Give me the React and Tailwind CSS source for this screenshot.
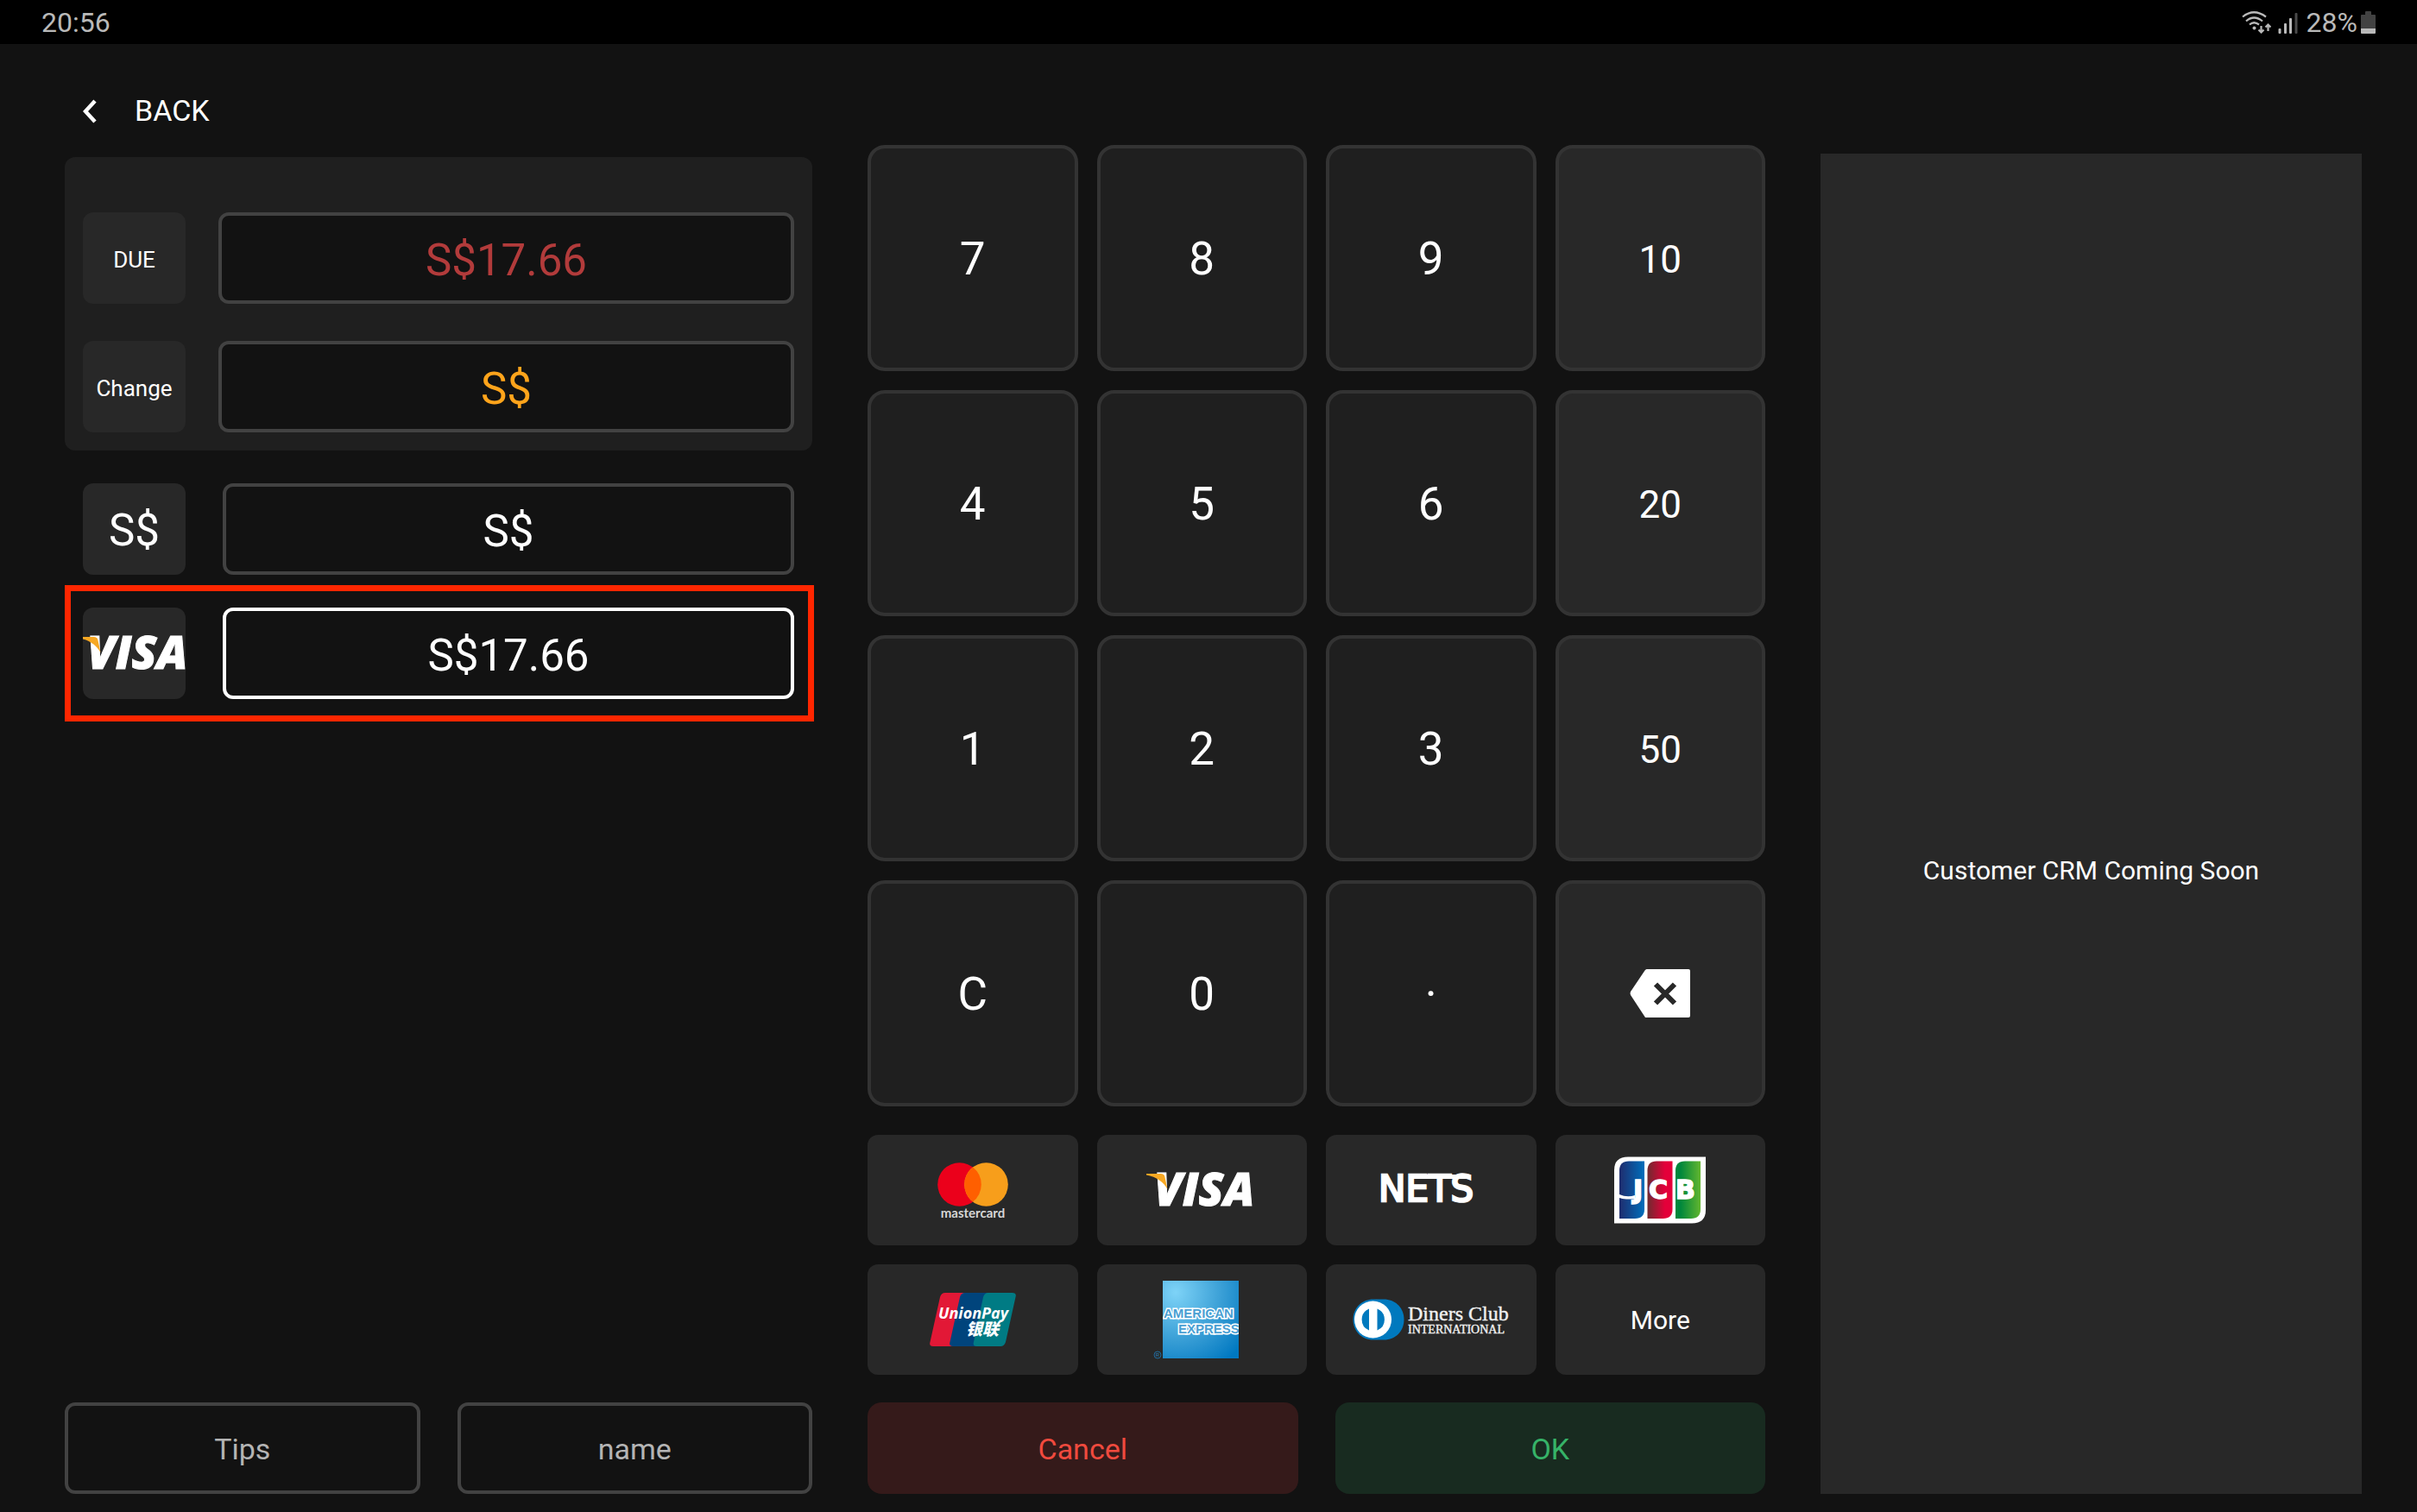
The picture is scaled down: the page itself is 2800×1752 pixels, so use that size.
import React, { useState } from 'react';

const KEYS = [
  ['7', '8', '9', '10'],
  ['4', '5', '6', '20'],
  ['1', '2', '3', '50'],
  ['C', '0', '·', 'back'],
];

const Visa = () => (
  <svg width="128" height="38" viewBox="0 0 128 38" className="shrink-0 overflow-visible" role="img" aria-label="Visa">
    <text x="9" y="37" fontFamily="Open Sans" fontWeight="800" fontStyle="italic" fontSize="53" fill="#fff" stroke="#fff" strokeWidth="1">VISA</text>
    <path d="M0 0H16.5C19.5 0 21 1 21.5 4L24.5 18C20 10 12 3.5 0 1.6Z" fill="#f7a823" />
  </svg>
);

const Mastercard = () => (
  <svg width="82" height="66" viewBox="0 0 82 66" className="overflow-visible" role="img" aria-label="Mastercard">
    <circle cx="25.5" cy="26.5" r="25.3" fill="#eb001b" />
    <circle cx="56.5" cy="26.5" r="25.3" fill="#f79e1b" />
    <path d="M41 6.5a25.3 25.3 0 0 1 0 40a25.3 25.3 0 0 1 0-40Z" fill="#ff5f00" />
    <text x="41" y="65" textAnchor="middle" fontFamily="Lato" fontWeight="700" fontSize="15" fill="#d6d6d6">mastercard</text>
  </svg>
);

const Nets = () => (
  <svg width="118" height="36" viewBox="0 0 118 36" className="overflow-visible" role="img" aria-label="NETS">
    <text x="-2" y="31" fontFamily="DejaVu Sans" fontSize="42" fill="#fff" stroke="#fff" strokeWidth="2.5">NETS</text>
    <rect x="34" y="0" width="70" height="5" fill="#fff" />
  </svg>
);

const Jcb = () => (
  <svg width="106" height="78" viewBox="0 0 106 78" role="img" aria-label="JCB">
    <defs>
      <linearGradient id="jcbBlue">
        <stop offset="0" stopColor="#1f2c6e" />
        <stop offset="1" stopColor="#006fbc" />
      </linearGradient>
      <linearGradient id="jcbRed">
        <stop offset="0" stopColor="#6f2b2f" />
        <stop offset="0.7" stopColor="#e4003a" />
      </linearGradient>
      <linearGradient id="jcbGreen">
        <stop offset="0.2" stopColor="#00873c" />
        <stop offset="1" stopColor="#62b62f" />
      </linearGradient>
    </defs>
    <path d="M16 0.5H106V62Q106 77.5 90 77.5H0V16Q0 0.5 16 0.5Z" fill="#fff" />
    <path d="M17 5.5H35V61Q35 72 24 72H6V16.5Q6 5.5 17 5.5Z" fill="url(#jcbBlue)" />
    <path d="M49 5.5H67.5V61Q67.5 72 56.5 72H38.5V16.5Q38.5 5.5 49 5.5Z" fill="url(#jcbRed)" />
    <path d="M82 5.5H100V61Q100 72 89 72H71V16.5Q71 5.5 82 5.5Z" fill="url(#jcbGreen)" />
    <path d="M6 44Q15 48 24 45V49.5H14Q9 49 6 48Z" fill="#fff" />
    <g fontFamily="DejaVu Sans" fontWeight="700" fontSize="30" fill="#fff" stroke="#fff" strokeWidth="1.5">
      <text x="22" y="49">J</text>
      <text x="40" y="49">C</text>
      <text x="71" y="49">B</text>
    </g>
  </svg>
);

const UnionPay = () => (
  <svg width="100" height="62" viewBox="0 0 100 62" role="img" aria-label="UnionPay">
    <path d="M18 0H50L36 62H4Q-1 62 0.5 57L12 5Q13.5 0 18 0Z" fill="#e21836" />
    <path d="M41 0H75L62 62H27Q22 62 23.5 57L35 5Q36.5 0 41 0Z" fill="#00447c" />
    <path d="M68 0H95.5Q101 0 99.5 5L88 57Q86.5 62 82 62H54.5Q49.5 62 51 57L62 5Q63.5 0 68 0Z" fill="#007b84" />
    <text x="10" y="30" fontFamily="Open Sans" fontWeight="700" fontStyle="italic" fontSize="18" fill="#fff">UnionPay</text>
    <text x="42" y="49" fontFamily="Noto Sans CJK SC" fontWeight="900" fontStyle="italic" fontSize="19" fill="#fff">银联</text>
  </svg>
);

const Amex = () => (
  <svg width="113" height="92" viewBox="0 0 113 92" role="img" aria-label="American Express">
    <defs>
      <radialGradient id="amexBlue" cx="0.17" cy="0.15" r="1.1">
        <stop offset="0" stopColor="#7ed3f7" />
        <stop offset="0.55" stopColor="#3a9fd6" />
        <stop offset="1" stopColor="#0078c1" />
      </radialGradient>
      <clipPath id="amexClip">
        <rect x="11" y="1" width="88" height="90" />
      </clipPath>
    </defs>
    <rect x="11" y="1" width="88" height="90" fill="url(#amexBlue)" />
    <g
      clipPath="url(#amexClip)"
      fontFamily="Liberation Sans"
      fontWeight="700"
      fontSize="15"
      fill="#4a9fd3"
      stroke="#fff"
      strokeWidth="3"
      paintOrder="stroke"
    >
      <text x="12" y="44">AMERICAN</text>
      <text x="29" y="62">EXPRESS</text>
    </g>
    <circle cx="5" cy="87" r="4" fill="none" stroke="#1f6a99" />
    <text x="5" y="89" textAnchor="middle" fontFamily="Liberation Sans" fontSize="6" fill="#2a7fb5">R</text>
  </svg>
);

const Diners = () => (
  <svg width="182" height="48" viewBox="0 0 182 48" role="img" aria-label="Diners Club International">
    <path d="M24 0.5H36C50 0.5 59.5 11 59.5 24S50 47.5 36 47.5H24C10 47.5 0.5 37 0.5 24S10 0.5 24 0.5Z" fill="#0079be" />
    <circle cx="23.5" cy="24" r="21.5" fill="#fff" />
    <path d="M19 11.5A13.5 13.5 0 0 0 19 36.5ZM28.5 11.5A13.5 13.5 0 0 1 28.5 36.5Z" fill="#0079be" />
    <g fontFamily="Liberation Serif" fill="#f0f0f0" stroke="#f0f0f0" strokeWidth="0.4">
      <text x="64" y="25" fontSize="24">Diners Club</text>
      <text x="64" y="40" fontSize="14">INTERNATIONAL</text>
    </g>
  </svg>
);

const METHODS = [
  { name: 'mastercard', logo: <Mastercard /> },
  { name: 'visa', logo: <Visa /> },
  { name: 'nets', logo: <Nets /> },
  { name: 'jcb', logo: <Jcb /> },
  { name: 'unionpay', logo: <UnionPay /> },
  { name: 'amex', logo: <Amex /> },
  { name: 'diners', logo: <Diners /> },
  { name: 'more', logo: 'More' },
];

const BackspaceIcon = () => (
  <svg width="70" height="56" viewBox="0 0 70 56" aria-hidden="true">
    <path d="M19.5 0H68Q70 0 70 2V54Q70 56 68 56H18L1 30Q0 28 1 26L17.5 1.5Q18.5 0 19.5 0Z" fill="#fff" />
    <path d="M30 17.5L52 39.5M52 17.5L30 39.5" stroke="#282828" strokeWidth="6" />
  </svg>
);

const StatusBar = () => (
  <header className="flex h-[51px] items-center justify-between bg-black px-12 text-[32px] leading-none text-[#b9b9b9]">
    <span>20:56</span>
    <div className="flex items-center">
      <svg width="34" height="26" viewBox="0 0 34 26" className="mr-2" aria-hidden="true">
        <g fill="none" stroke="#b9b9b9" strokeWidth="2.2">
          <path d="M1 6.5Q14 -4 28 6.5" />
          <path d="M5 11.5Q14 3.5 24 11.5" />
          <path d="M9 15.5Q14 11 20 15.5" />
          <path d="M22.5 17V24M19.5 21.5L22.5 24.5L25.5 21.5" />
          <path d="M30.5 23V16M27.5 18.5L30.5 15.5L33.5 18.5" />
        </g>
        <circle cx="14.5" cy="19.5" r="2" fill="#b9b9b9" />
      </svg>
      <svg width="23" height="26" viewBox="0 0 23 26" className="mr-[10px]" aria-hidden="true">
        <rect x="0.5" y="20" width="3" height="6" rx="1" fill="#b9b9b9" />
        <rect x="7" y="14" width="3" height="12" rx="1" fill="#b9b9b9" />
        <rect x="13" y="8" width="3" height="18" rx="1" fill="#b9b9b9" />
        <rect x="19.5" y="2" width="3" height="24" rx="1" fill="#4a4a4a" />
      </svg>
      <span>28%</span>
      <svg width="17" height="26" viewBox="0 0 17 26" className="ml-1" aria-hidden="true">
        <path d="M5 1Q5 0 6 0H11Q12 0 12 1V4H16Q17 4 17 5V20H0V5Q0 4 1 4H5Z" fill="#424242" />
        <path d="M0 20H17V25Q17 26 16 26H1Q0 26 0 25Z" fill="#b9b9b9" />
      </svg>
    </div>
  </header>
);

// One line of the left column: small tag and the amount beside it
const AmountRow = ({ id, tag, tagClass, label, value, gapClass, fieldClass }) => (
  <div className={`flex items-stretch ${gapClass}`}>
    <label
      htmlFor={id}
      aria-label={label}
      className={`flex h-[106px] w-[119px] shrink-0 items-center justify-center overflow-hidden rounded-xl bg-[#282828] ${tagClass}`}
    >
      {tag}
    </label>
    <input
      id={id}
      type="text"
      readOnly
      value={value}
      className={`h-[106px] min-w-0 flex-1 rounded-xl border-4 bg-[#121212] pt-1 text-center text-[51px] outline-none ${fieldClass}`}
    />
  </div>
);

const App = () => {
  const [paid, setPaid] = useState('17.66');

  // 'C' clears, the arrow removes the last character, notes replace the amount
  const handleKey = (key) => {
    if (key === 'C') setPaid('');
    else if (key === 'back') setPaid((prev) => prev.slice(0, -1));
    else if (key.length === 2) setPaid(key);
    else setPaid((prev) => prev + (key === '·' ? '.' : key));
  };

  return (
    <div className="flex min-h-screen flex-col bg-[#121212] font-[Roboto,sans-serif] text-white">
      <StatusBar />

      <main className="grid flex-1 grid-cols-[866fr_1040fr_627fr] gap-16 pr-16 pb-[21px] pl-[75px]">
        {/* Amounts */}
        <section className="flex min-w-0 flex-col">
          <button type="button" className="flex h-[131px] items-center gap-11 self-start pt-6 pl-[21px] text-[34px]">
            <svg width="16" height="28" viewBox="0 0 16 28" aria-hidden="true">
              <path d="M14 2L3 14L14 26" fill="none" stroke="#fff" strokeWidth="4.5" />
            </svg>
            BACK
          </button>

          <div className="flex flex-col gap-[43px] rounded-xl bg-[#1f1f1f] px-[21px] pt-16 pb-[21px]">
            <AmountRow id="due" tag="DUE" tagClass="pt-1 text-[26px]" value="S$17.66" gapClass="gap-[38px]" fieldClass="border-[#424242] text-[#b23b3b]" />
            <AmountRow id="change" tag="Change" tagClass="pt-1 text-[26px]" value="S$" gapClass="gap-[38px]" fieldClass="border-[#424242] text-[#ffa41b]" />
          </div>

          <div className="px-[21px] pt-[38px] pb-3">
            <AmountRow id="cash" tag="S$" tagClass="pt-1 text-[51px]" value="S$" gapClass="gap-[43px]" fieldClass="border-[#424242]" />
          </div>
          <div className="-mr-0.5 border-[7px] border-[#ff2600] py-[19px] pr-4 pl-[14px]">
            <AmountRow id="card" tag={<Visa />} label="Visa" tagClass="" value={`S$${paid}`} gapClass="gap-[43px]" fieldClass="border-white" />
          </div>

          <div className="mt-auto grid grid-cols-2 gap-[43px] text-[34px] text-[#b4b4b4]">
            <button type="button" className="h-[106px] rounded-xl border-4 border-[#424242] pt-0.5">Tips</button>
            <button type="button" className="h-[106px] rounded-xl border-4 border-[#424242] pt-0.5">name</button>
          </div>
        </section>

        {/* Keypad and payment methods */}
        <section className="flex min-w-0 flex-col pt-[117px]">
          <div className="grid grid-cols-4 gap-[22px]">
            {KEYS.flat().map((key) => (
              <button
                key={key}
                type="button"
                aria-label={key === 'back' ? 'Backspace' : undefined}
                onClick={() => handleKey(key)}
                className={`flex h-[262px] items-center justify-center rounded-[20px] border-4 border-[#333333] ${
                  key.length > 1 ? 'bg-[#282828] text-[44px]' : 'bg-[#1f1f1f] text-[53px]'
                } ${key === 'back' ? '' : 'pt-1'}`}
              >
                {key === 'back' ? <BackspaceIcon /> : key}
              </button>
            ))}
          </div>

          <div className="mt-[33px] grid grid-cols-4 gap-[22px]">
            {METHODS.map((method) => (
              <button
                key={method.name}
                type="button"
                className="flex h-32 items-center justify-center overflow-hidden rounded-xl bg-[#282828] text-[30px]"
              >
                {method.logo}
              </button>
            ))}
          </div>

          <div className="mt-auto grid grid-cols-2 gap-[43px] text-[34px]">
            <button type="button" className="h-[106px] rounded-2xl bg-[#351a1a] pt-0.5 text-[#f04a3e]">Cancel</button>
            <button type="button" className="h-[106px] rounded-2xl bg-[#182b20] pt-0.5 text-[#36b368]">OK</button>
          </div>
        </section>

        {/* Customer panel */}
        <aside className="mt-[127px] flex items-center justify-center bg-[#282828] pt-[108px] text-[30px]">
          <p>Customer CRM Coming Soon</p>
        </aside>
      </main>
    </div>
  );
};

export default App;
